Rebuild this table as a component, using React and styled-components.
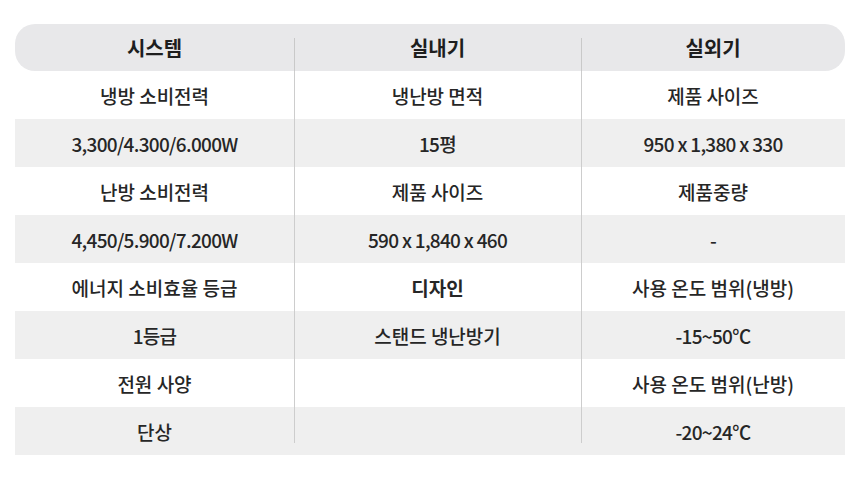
import React from 'react';
import styled, { createGlobalStyle } from 'styled-components';

const GlobalStyle = createGlobalStyle`
  body {
    margin: 0;
    background: #ffffff;
    font-family: "Noto Sans CJK KR", "Noto Sans", sans-serif;
    color: #222222;
  }
`

const Page = styled.div`
  width: 860px;
  height: 481px;
  padding: 24px 15px 0 15px;
  box-sizing: border-box;
`
const SpecTable = styled.div`
  display: grid;
  grid-template-columns: 279px 287px 264px;
`
const HeadCell = styled.div`
  position: relative;
  height: 47px;
  display: flex;
  align-items: center;
  justify-content: center;
  background: #e8e8ea;
  font-size: 20px;
  font-weight: 700;
  color: #1e1e1e;
  border-radius: ${p => p.$first ? '20px 0 0 20px' : p.$last ? '0 20px 20px 0' : '0'};
  &::before {
    content: '';
    display: ${p => p.$first ? 'none' : 'block'};
    position: absolute;
    left: 0;
    top: 14px;
    bottom: 0;
    width: 1px;
    background: #c9c9c9;
  }
`
const Cell = styled.div`
  position: relative;
  height: 48px;
  display: flex;
  align-items: center;
  justify-content: center;
  background: ${p => p.$shaded ? '#efefef' : '#ffffff'};
  font-size: 19px;
  font-weight: ${p => p.$bold ? 700 : 500};
  color: #262626;
  letter-spacing: ${p => p.$numeric ? '-0.7px' : '0'};
  &::before {
    content: '';
    display: ${p => p.$first ? 'none' : 'block'};
    position: absolute;
    left: 0;
    top: 0;
    bottom: ${p => p.$end ? '12px' : '0'};
    width: 1px;
    background: #cdcdcd;
  }
`

const heads = ['시스템', '실내기', '실외기']

const rows = [
  ['냉방 소비전력', '냉난방 면적', '제품 사이즈'],
  ['3,300/4.300/6.000W', '15평', '950 x 1,380 x 330'],
  ['난방 소비전력', '제품 사이즈', '제품중량'],
  ['4,450/5.900/7.200W', '590 x 1,840 x 460', '-'],
  ['에너지 소비효율 등급', { text: '디자인', bold: true }, '사용 온도 범위(냉방)'],
  ['1등급', '스탠드 냉난방기', '-15~50℃'],
  ['전원 사양', '', '사용 온도 범위(난방)'],
  ['단상', '', '-20~24℃'],
]

const App = () => {
  return (
    <Page>
      <GlobalStyle />
      <SpecTable>
        {heads.map((h, i) => (
          <HeadCell key={h} $first={i === 0} $last={i === heads.length - 1}>{h}</HeadCell>
        ))}
        {rows.map((row, r) =>
          row.map((c, i) => {
            const text = typeof c === 'string' ? c : c.text
            return (
              <Cell
                key={r + '-' + i}
                $shaded={r % 2 === 1}
                $first={i === 0}
                $end={r === rows.length - 1}
                $bold={typeof c !== 'string' && c.bold}
                $numeric={/[0-9]/.test(text) || text === '-'}
              >
                {text}
              </Cell>
            )
          })
        )}
      </SpecTable>
    </Page>
  )
}
export default App;
